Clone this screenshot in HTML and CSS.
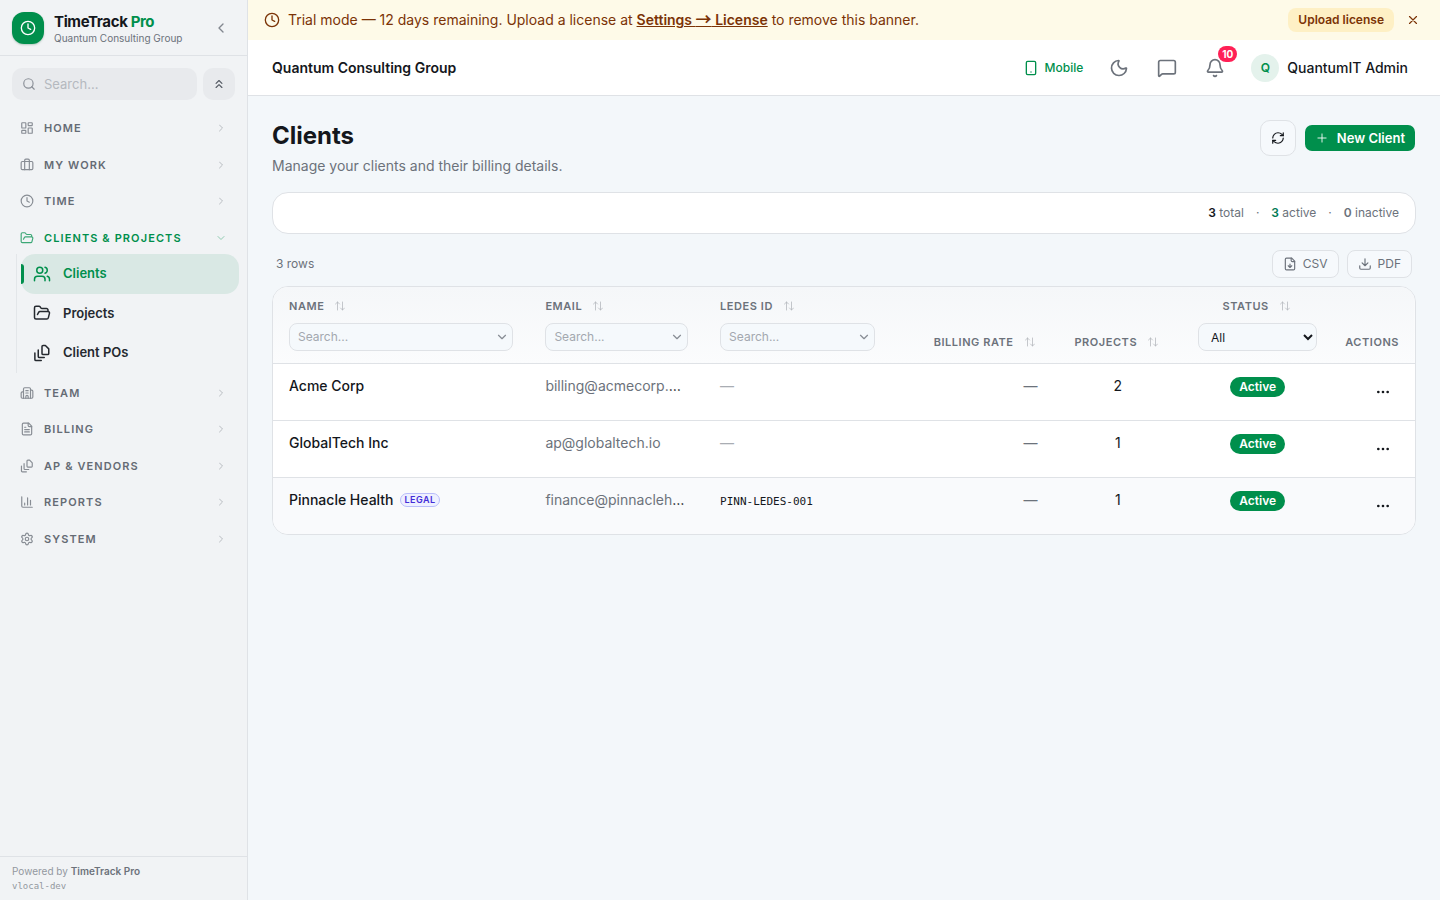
FILE: index.html
```html
<!DOCTYPE html>
<html lang="en">
<head>
<meta charset="utf-8">
<meta name="viewport" content="width=device-width, initial-scale=1">
<title>Clients – TimeTrack Pro</title>
<link rel="stylesheet" href="styles.css">
</head>
<body>
<svg class="sprite" aria-hidden="true">
  <symbol id="clock" viewBox="0 0 24 24"><circle cx="12" cy="12" r="10"/><path d="M12 6v6l4 2"/></symbol>
  <symbol id="left" viewBox="0 0 24 24"><path d="m15 18-6-6 6-6"/></symbol>
  <symbol id="right" viewBox="0 0 24 24"><path d="m9 18 6-6-6-6"/></symbol>
  <symbol id="down" viewBox="0 0 24 24"><path d="m6 9 6 6 6-6"/></symbol>
  <symbol id="search" viewBox="0 0 24 24"><circle cx="11" cy="11" r="8"/><path d="m21 21-4.3-4.3"/></symbol>
  <symbol id="collapse" viewBox="0 0 24 24"><path d="m17 11-5-5-5 5M17 18l-5-5-5 5"/></symbol>
  <symbol id="dashboard" viewBox="0 0 24 24"><rect width="7" height="9" x="3" y="3" rx="1"/><rect width="7" height="5" x="14" y="3" rx="1"/><rect width="7" height="9" x="14" y="12" rx="1"/><rect width="7" height="5" x="3" y="16" rx="1"/></symbol>
  <symbol id="briefcase" viewBox="0 0 24 24"><path d="M16 20V4a2 2 0 0 0-2-2h-4a2 2 0 0 0-2 2v16"/><rect width="20" height="14" x="2" y="6" rx="2"/></symbol>
  <symbol id="folder" viewBox="0 0 24 24"><path d="m6 14 1.5-2.9A2 2 0 0 1 9.240 10H20a2 2 0 0 1 1.940 2.500l-1.540 6a2 2 0 0 1-1.950 1.500H4a2 2 0 0 1-2-2V5a2 2 0 0 1 2-2h3.900a2 2 0 0 1 1.690.9l.81 1.200a2 2 0 0 0 1.670.9H18a2 2 0 0 1 2 2v2"/></symbol>
  <symbol id="users" viewBox="0 0 24 24"><path d="M16 21v-2a4 4 0 0 0-4-4H6a4 4 0 0 0-4 4v2"/><circle cx="9" cy="7" r="4"/><path d="M22 21v-2a4 4 0 0 0-3-3.870M16 3.130a4 4 0 0 1 0 7.750"/></symbol>
  <symbol id="stack" viewBox="0 0 24 24"><path d="M21 6.500v6c0 .8-.7 1.500-1.500 1.500h-6c-.8 0-1.500-.7-1.500-1.500v-9c0-.8.7-1.500 1.500-1.500H16.500z"/><path d="M7 8v8.500c0 .8.7 1.500 1.500 1.500H15"/><path d="M2.500 12v8.500c0 .8.7 1.500 1.500 1.500H11"/></symbol>
  <symbol id="building" viewBox="0 0 24 24"><path d="M10 12h4M10 8h4M14 21v-3a2 2 0 0 0-4 0v3"/><path d="M6 10H4a2 2 0 0 0-2 2v7a2 2 0 0 0 2 2h16a2 2 0 0 0 2-2V9a2 2 0 0 0-2-2h-2"/><path d="M6 21V5a2 2 0 0 1 2-2h8a2 2 0 0 1 2 2v16"/></symbol>
  <symbol id="file" viewBox="0 0 24 24"><path d="M15 2H6a2 2 0 0 0-2 2v16a2 2 0 0 0 2 2h12a2 2 0 0 0 2-2V7Z"/><path d="M14 2v4a2 2 0 0 0 2 2h4M10 9H8M16 13H8M16 17H8"/></symbol>
  <symbol id="chart" viewBox="0 0 24 24"><path d="M3 3v16a2 2 0 0 0 2 2h16M18 17V9M13 17V5M8 17v-3"/></symbol>
  <symbol id="gear" viewBox="0 0 24 24"><path d="M9.671 4.136a2.34 2.34 0 0 1 4.659 0 2.34 2.34 0 0 0 3.319 1.915 2.34 2.34 0 0 1 2.33 4.033 2.34 2.34 0 0 0 0 3.831 2.34 2.34 0 0 1-2.33 4.033 2.34 2.34 0 0 0-3.319 1.915 2.34 2.34 0 0 1-4.659 0 2.34 2.34 0 0 0-3.32-1.915 2.34 2.34 0 0 1-2.33-4.033 2.34 2.34 0 0 0 0-3.831A2.34 2.34 0 0 1 6.35 6.051a2.34 2.34 0 0 0 3.319-1.915"/><circle cx="12" cy="12" r="3"/></symbol>
  <symbol id="close" viewBox="0 0 24 24"><path d="M18 6 6 18M6 6l12 12"/></symbol>
  <symbol id="phone" viewBox="0 0 24 24"><rect width="14" height="20" x="5" y="2" rx="2"/><path d="M12 18h.01"/></symbol>
  <symbol id="moon" viewBox="0 0 24 24"><path d="M20.985 12.486a9 9 0 1 1-9.473-9.472c.405-.022.617.46.402.803a6 6 0 0 0 8.268 8.268c.344-.215.825-.004.803.401"/></symbol>
  <symbol id="message" viewBox="0 0 24 24"><path d="M22 17a2 2 0 0 1-2 2H6.828a2 2 0 0 0-1.414.586l-2.202 2.202A.71.71 0 0 1 2 21.286V5a2 2 0 0 1 2-2h16a2 2 0 0 1 2 2z"/></symbol>
  <symbol id="bell" viewBox="0 0 24 24"><path d="M10.268 21a2 2 0 0 0 3.464 0"/><path d="M3.262 15.326A1 1 0 0 0 4 17h16a1 1 0 0 0 .740-1.673C19.410 13.956 18 12.499 18 8A6 6 0 0 0 6 8c0 4.499-1.411 5.956-2.738 7.326"/></symbol>
  <symbol id="refresh" viewBox="0 0 24 24"><path d="M3 12a9 9 0 0 1 9-9 9.750 9.750 0 0 1 6.740 2.740L21 8"/><path d="M21 3v5h-5"/><path d="M21 12a9 9 0 0 1-9 9 9.750 9.750 0 0 1-6.740-2.740L3 16"/><path d="M8 16H3v5"/></symbol>
  <symbol id="plus" viewBox="0 0 24 24"><path d="M5 12h14M12 5v14"/></symbol>
  <symbol id="filedown" viewBox="0 0 24 24"><path d="M15 2H6a2 2 0 0 0-2 2v16a2 2 0 0 0 2 2h12a2 2 0 0 0 2-2V7Z"/><path d="M14 2v4a2 2 0 0 0 2 2h4M12 18v-6M9 15l3 3 3-3"/></symbol>
  <symbol id="download" viewBox="0 0 24 24"><path d="M21 15v4a2 2 0 0 1-2 2H5a2 2 0 0 1-2-2v-4M7 10l5 5 5-5M12 15V3"/></symbol>
  <symbol id="sort" viewBox="0 0 24 24"><path d="m21 16-4 4-4-4M17 20V4M3 8l4-4 4 4M7 4v16"/></symbol>
  <symbol id="dots" viewBox="0 0 24 24"><circle cx="12" cy="12" r="1"/><circle cx="19" cy="12" r="1"/><circle cx="5" cy="12" r="1"/></symbol>
</svg>

<div class="app">
  <aside class="sidebar">
    <div class="brand">
      <span class="logo"><svg class="icon i16"><use href="#clock"/></svg></span>
      <div class="brand-text">
        <div class="brand-name">TimeTrack <span class="accent">Pro</span></div>
        <div class="brand-org">Quantum Consulting Group</div>
      </div>
      <button class="plain collapse" aria-label="Collapse sidebar"><svg class="icon i16"><use href="#left"/></svg></button>
    </div>
    <div class="side-tools">
      <label class="side-search"><svg class="icon i14"><use href="#search"/></svg><input type="text" placeholder="Search..." aria-label="Search menu"></label>
      <button class="side-fold" aria-label="Collapse all"><svg class="icon i14"><use href="#collapse"/></svg></button>
    </div>
    <nav class="nav">
      <button class="section"><svg class="icon i14"><use href="#dashboard"/></svg><span>HOME</span><svg class="icon i12 chev"><use href="#right"/></svg></button>
      <button class="section"><svg class="icon i14"><use href="#briefcase"/></svg><span>MY WORK</span><svg class="icon i12 chev"><use href="#right"/></svg></button>
      <button class="section"><svg class="icon i14"><use href="#clock"/></svg><span>TIME</span><svg class="icon i12 chev"><use href="#right"/></svg></button>
      <div>
        <button class="section open" aria-expanded="true"><svg class="icon i14"><use href="#folder"/></svg><span>CLIENTS &amp; PROJECTS</span><svg class="icon i12 chev"><use href="#down"/></svg></button>
        <div class="submenu">
          <a class="item current" href="#clients" aria-current="page"><svg class="icon i18"><use href="#users"/></svg>Clients</a>
          <a class="item" href="#projects"><svg class="icon i18"><use href="#folder"/></svg>Projects</a>
          <a class="item" href="#pos"><svg class="icon i18"><use href="#stack"/></svg>Client POs</a>
        </div>
      </div>
      <button class="section"><svg class="icon i14"><use href="#building"/></svg><span>TEAM</span><svg class="icon i12 chev"><use href="#right"/></svg></button>
      <button class="section"><svg class="icon i14"><use href="#file"/></svg><span>BILLING</span><svg class="icon i12 chev"><use href="#right"/></svg></button>
      <button class="section"><svg class="icon i14"><use href="#stack"/></svg><span>AP &amp; VENDORS</span><svg class="icon i12 chev"><use href="#right"/></svg></button>
      <button class="section"><svg class="icon i14"><use href="#chart"/></svg><span>REPORTS</span><svg class="icon i12 chev"><use href="#right"/></svg></button>
      <button class="section"><svg class="icon i14"><use href="#gear"/></svg><span>SYSTEM</span><svg class="icon i12 chev"><use href="#right"/></svg></button>
    </nav>
    <footer class="side-foot">
      <div>Powered by <strong>TimeTrack Pro</strong></div>
      <div class="version">vlocal-dev</div>
    </footer>
  </aside>

  <div class="page">
    <div class="banner">
      <svg class="icon i16"><use href="#clock"/></svg>
      <p>Trial mode — 12 days remaining. Upload a license at <a href="#license">Settings <span class="arrow">→</span> License</a> to remove this banner.</p>
      <button class="upload">Upload license</button>
      <button class="plain dismiss" aria-label="Dismiss"><svg class="icon i14"><use href="#close"/></svg></button>
    </div>
    <header class="topbar">
      <div class="org">Quantum Consulting Group</div>
      <a class="mobile" href="#mobile"><svg class="icon i16"><use href="#phone"/></svg>Mobile</a>
      <div class="top-icons">
        <button class="plain top-btn" aria-label="Dark mode"><svg class="icon i20"><use href="#moon"/></svg></button>
        <button class="plain top-btn" aria-label="Messages"><svg class="icon i20"><use href="#message"/></svg></button>
        <button class="plain top-btn" aria-label="Notifications"><svg class="icon i20"><use href="#bell"/></svg><span class="count">10</span></button>
      </div>
      <button class="plain user"><span class="avatar">Q</span>QuantumIT Admin</button>
    </header>

    <main class="main">
      <div class="heading">
        <div>
          <h1>Clients</h1>
          <p>Manage your clients and their billing details.</p>
        </div>
        <div class="actions">
          <button class="refresh" aria-label="Refresh"><svg class="icon i14"><use href="#refresh"/></svg></button>
          <button class="new"><svg class="icon i14"><use href="#plus"/></svg>New Client</button>
        </div>
      </div>

      <div class="stats">
        <span><b class="dark">3</b> total</span><span>·</span><span><b class="teal">3</b> active</span><span>·</span><span><b>0</b> inactive</span>
      </div>

      <div class="toolbar">
        <span class="rows">3 rows</span>
        <button class="export"><svg class="icon i14"><use href="#filedown"/></svg>CSV</button>
        <button class="export"><svg class="icon i14"><use href="#download"/></svg>PDF</button>
      </div>

      <div class="card">
        <table>
          <colgroup><col class="c-name"><col class="c-email"><col class="c-ledes"><col class="c-rate"><col class="c-projects"><col class="c-status"><col class="c-actions"></colgroup>
          <thead>
            <tr>
              <th><button class="sort">NAME<svg class="icon i12"><use href="#sort"/></svg></button><label class="filter"><input type="text" placeholder="Search..." aria-label="Filter by name"><svg class="icon i14"><use href="#down"/></svg></label></th>
              <th><button class="sort">EMAIL<svg class="icon i12"><use href="#sort"/></svg></button><label class="filter"><input type="text" placeholder="Search..." aria-label="Filter by email"><svg class="icon i14"><use href="#down"/></svg></label></th>
              <th><button class="sort">LEDES ID<svg class="icon i12"><use href="#sort"/></svg></button><label class="filter"><input type="text" placeholder="Search..." aria-label="Filter by LEDES ID"><svg class="icon i14"><use href="#down"/></svg></label></th>
              <th><button class="sort end">BILLING RATE<svg class="icon i12"><use href="#sort"/></svg></button></th>
              <th><button class="sort mid">PROJECTS<svg class="icon i12"><use href="#sort"/></svg></button></th>
              <th><button class="sort mid">STATUS<svg class="icon i12"><use href="#sort"/></svg></button><select class="status-filter" aria-label="Filter by status"><option>All</option><option>Active</option><option>Inactive</option></select></th>
              <th class="right">ACTIONS</th>
            </tr>
          </thead>
          <tbody>
            <tr>
              <td class="name">Acme Corp</td>
              <td class="email"><span>billing@acmecorp.com</span></td>
              <td class="none">—</td>
              <td class="right muted">—</td>
              <td class="center">2</td>
              <td class="center"><span class="badge">Active</span></td>
              <td class="right"><button class="plain more" aria-label="Actions for Acme Corp"><svg class="icon i16"><use href="#dots"/></svg></button></td>
            </tr>
            <tr>
              <td class="name">GlobalTech Inc</td>
              <td class="email"><span>ap@globaltech.io</span></td>
              <td class="none">—</td>
              <td class="right muted">—</td>
              <td class="center">1</td>
              <td class="center"><span class="badge">Active</span></td>
              <td class="right"><button class="plain more" aria-label="Actions for GlobalTech Inc"><svg class="icon i16"><use href="#dots"/></svg></button></td>
            </tr>
            <tr class="shaded">
              <td class="name"><div class="name-line">Pinnacle Health<span class="tag">LEGAL</span></div></td>
              <td class="email"><span>finance@pinnaclehealth.org</span></td>
              <td><span class="code">PINN-LEDES-001</span></td>
              <td class="right muted">—</td>
              <td class="center">1</td>
              <td class="center"><span class="badge">Active</span></td>
              <td class="right"><button class="plain more" aria-label="Actions for Pinnacle Health"><svg class="icon i16"><use href="#dots"/></svg></button></td>
            </tr>
          </tbody>
        </table>
      </div>
    </main>
  </div>
</div>
</body>
</html>
```
FILE: styles.css
```css
:root {
  --green: #008f4c;
  --ink: #14171c;
  --muted: #6c727b;
  --line: #dfe2e6;
  --bg: #f3f7fa;
}

* { box-sizing: border-box; }

body {
  margin: 0;
  font: 14px/20px Inter, "Liberation Sans", sans-serif;
  color: var(--ink);
  background: var(--bg);
}

button, input, select { font: inherit; color: inherit; margin: 0; }
button { cursor: pointer; }
h1, p { margin: 0; }
a { color: inherit; text-decoration: none; }

.sprite { position: absolute; width: 0; height: 0; }
.icon {
  flex: none;
  display: block;
  fill: none;
  stroke: currentColor;
  stroke-width: 2;
  stroke-linecap: round;
  stroke-linejoin: round;
}
.i12 { width: 12px; height: 12px; }
.i14 { width: 14px; height: 14px; }
.i16 { width: 16px; height: 16px; }
.i18 { width: 18px; height: 18px; }
.i20 { width: 20px; height: 20px; }
.plain { border: 0; padding: 0; background: none; }
.accent { color: var(--green); }

.app { display: flex; min-height: 100vh; }

/* Sidebar */
.sidebar {
  flex: none;
  width: 248px;
  display: flex;
  flex-direction: column;
  background: #f1f3f5;
  border-right: 1px solid var(--line);
}
.brand {
  display: flex;
  align-items: center;
  gap: 10px;
  height: 56px;
  padding: 0 12px;
  border-bottom: 1px solid var(--line);
}
.logo {
  display: grid;
  place-items: center;
  width: 32px;
  height: 32px;
  border-radius: 12px;
  background: var(--green);
  color: #fff;
  box-shadow: 0 1px 2px rgba(0, 80, 40, .25);
}
.brand-text { flex: 1; padding-top: 2px; }
.brand-name { font-size: 15px; font-weight: 700; line-height: 20px; letter-spacing: -0.025em; }
.brand-org { font-size: 10px; line-height: 13px; color: var(--muted); }
.collapse { display: grid; place-items: center; width: 28px; height: 28px; color: #82878f; }

.side-tools { display: flex; gap: 6px; padding: 12px; }
.side-search {
  flex: 1;
  min-width: 0;
  display: flex;
  align-items: center;
  gap: 8px;
  height: 32px;
  padding: 0 10px;
  border-radius: 10px;
  background: #e8eaed;
  color: #8b9098;
}
.side-search input {
  flex: 1;
  min-width: 0;
  border: 0;
  padding: 0;
  background: none;
  font-size: 13px;
  color: var(--ink);
}
.side-search input::placeholder { color: #b5b9bf; }
.side-fold {
  flex: none;
  display: grid;
  place-items: center;
  width: 32px;
  height: 32px;
  padding: 0;
  border: 0;
  border-radius: 10px;
  background: #e8eaed;
  color: #555b64;
}

.nav { flex: 1; display: flex; flex-direction: column; gap: 4px; padding: 0 8px; }
.section {
  display: flex;
  align-items: center;
  gap: 10px;
  width: 100%;
  padding: 8px 12px;
  border: 0;
  background: none;
  font-size: 11px;
  font-weight: 600;
  line-height: 1.5;
  letter-spacing: 0.1em;
  text-align: left;
  color: #656b74;
}
.section span { flex: 1; }
.section .icon { opacity: .75; }
.section .chev { opacity: .4; }
.section.open { color: var(--green); }
.submenu { margin-left: 8px; padding-left: 4px; border-left: 1px solid #e3e6e9; }
.item {
  display: flex;
  align-items: center;
  gap: 12px;
  padding: 10px 12px;
  border-radius: 14px;
  font-size: 13px;
  font-weight: 600;
  line-height: 1.5;
  color: #25292f;
}
.item.current { position: relative; background: #d9e8e4; color: var(--green); }
.item.current::before {
  content: "";
  position: absolute;
  left: 0;
  top: 10px;
  bottom: 10px;
  width: 3px;
  border-radius: 0 3px 3px 0;
  background: var(--green);
}
.side-foot {
  padding: 7px 12px;
  border-top: 1px solid var(--line);
  font-size: 10px;
  line-height: 15px;
  color: #93989f;
}
.side-foot strong { font-weight: 600; color: var(--muted); }
.version { font-family: "DejaVu Sans Mono", monospace; font-size: 9px; line-height: 14px; }

/* Page frame */
.page { flex: 1; min-width: 0; display: flex; flex-direction: column; }
.banner {
  display: flex;
  align-items: center;
  gap: 8px;
  height: 40px;
  padding: 0 16px;
  background: #fefae8;
  color: #7b3306;
}
.banner p { flex: 1; }
.banner a { font-weight: 600; text-decoration: underline; }
.arrow { font-family: "Noto Sans CJK JP", sans-serif; font-size: 16px; line-height: 1; }
.upload {
  height: 24px;
  padding: 0 10px;
  border: 0;
  border-radius: 8px;
  background: #fef0c5;
  font-size: 12px;
  font-weight: 600;
}
.dismiss { display: grid; place-items: center; width: 22px; height: 24px; }

.topbar {
  display: flex;
  align-items: center;
  height: 56px;
  padding: 0 24px;
  background: #fff;
  border-bottom: 1px solid var(--line);
}
.org { flex: 1; font-weight: 600; }
.mobile { display: flex; align-items: center; gap: 6px; font-size: 12px; font-weight: 500; color: var(--green); }
.top-icons { display: flex; gap: 8px; padding: 0 8px 0 16px; }
.top-btn { position: relative; display: grid; place-items: center; width: 40px; height: 40px; color: var(--muted); }
.count {
  position: absolute;
  top: -2px;
  right: -2px;
  padding: 0 4px;
  border-radius: 8px;
  background: #ff2056;
  color: #fff;
  font-size: 10px;
  font-weight: 700;
  line-height: 16px;
}
.user { display: flex; align-items: center; gap: 8px; padding: 0 8px; font-weight: 500; }
.avatar {
  display: grid;
  place-items: center;
  width: 28px;
  height: 28px;
  border-radius: 50%;
  background: #e4f2ec;
  color: var(--green);
  font-size: 12px;
  font-weight: 600;
}

/* Content */
.main { padding: 24px; }
.heading { display: flex; justify-content: space-between; align-items: flex-start; margin-bottom: 16px; }
h1 { font-size: 24px; line-height: 32px; font-weight: 700; }
.heading p { margin-top: 4px; color: var(--muted); }
.actions { display: flex; align-items: center; gap: 8px; }
.refresh {
  display: grid;
  place-items: center;
  width: 36px;
  height: 36px;
  padding: 0;
  border: 1px solid var(--line);
  border-radius: 10px;
  background: #f6f9fc;
}
.new {
  display: flex;
  align-items: center;
  gap: 8px;
  height: 28px;
  padding: 0 10px;
  border: 1px solid transparent;
  border-radius: 8px;
  background: var(--green) padding-box;
  color: #fff;
  font-size: 13px;
  font-weight: 600;
}
.new .icon { stroke-width: 1.5; }

.stats {
  display: flex;
  justify-content: flex-end;
  gap: 12px;
  padding: 12px 16px;
  border: 1px solid var(--line);
  border-radius: 16px;
  background: #fff;
  color: var(--muted);
  font-size: 12px;
  line-height: 16px;
}
.stats b { font-weight: 600; }
.stats .dark { color: var(--ink); }
.stats .teal { color: #007a55; }

.toolbar { display: flex; align-items: center; gap: 8px; margin: 16px 0 8px; padding: 0 4px; }
.rows { flex: 1; font-size: 12px; color: var(--muted); }
.export {
  display: flex;
  align-items: center;
  gap: 6px;
  height: 28px;
  padding: 0 10px;
  border: 1px solid var(--line);
  border-radius: 8px;
  background: #f6f9fc;
  font-size: 12px;
  color: var(--muted);
}

.card { overflow: hidden; border: 1px solid var(--line); border-radius: 16px; background: #fff; }
table { width: 100%; table-layout: fixed; border-collapse: separate; border-spacing: 0; }
.c-name { width: 22.45%; }
.c-email { width: 15.3%; }
.c-ledes { width: 16.4%; }
.c-rate { width: 14.2%; }
.c-projects { width: 11.25%; }
.c-status { width: 13.25%; }
.c-actions { width: 7.15%; }
thead { background: linear-gradient(#f5f7f9, #fbfcfd); }
th {
  padding: 10px 16px 12px;
  border-bottom: 1px solid var(--line);
  vertical-align: bottom;
  font-size: 11px;
  font-weight: 600;
  line-height: 18px;
  letter-spacing: 0.05em;
  text-align: left;
  color: var(--muted);
}
th.right { padding-left: 0; text-align: right; }
.sort {
  display: flex;
  align-items: center;
  gap: 10px;
  width: 100%;
  padding: 0 2px 0 0;
  border: 0;
  background: none;
  letter-spacing: inherit;
  white-space: nowrap;
}
.sort .icon { opacity: .5; stroke-width: 1.5; }
.end { justify-content: flex-end; }
.mid { justify-content: center; }
.filter, .status-filter {
  display: flex;
  align-items: center;
  width: 100%;
  height: 28px;
  margin-top: 8px;
  padding: 0 3px 0 8px;
  border: 1px solid var(--line);
  border-radius: 8px;
  background: #f5f9fc;
  font-size: 12px;
  font-weight: 400;
  letter-spacing: normal;
}
.filter .icon { opacity: .8; }
.filter input { flex: 1; min-width: 0; border: 0; padding: 0; background: none; color: var(--ink); }
.filter input::placeholder { color: #a3a8af; }
.status-filter { padding: 0 0 0 8px; color: var(--ink); }
td { padding: 12px 16px; border-bottom: 1px solid var(--line); vertical-align: top; }
tbody tr:last-child td { border-bottom: 0; }
.shaded { background: #f9fafc; }
.name { font-weight: 500; }
.name-line { display: flex; align-items: center; gap: 6px; }
.tag {
  padding: 0 4px;
  border: 1px solid #b9bdfa;
  border-radius: 7px;
  background: #eef0ff;
  color: #432dd7;
  font-size: 9px;
  font-weight: 600;
  line-height: 12px;
  letter-spacing: 0.05em;
}
.email { overflow: hidden; text-overflow: ellipsis; white-space: nowrap; }
.email span, .muted { color: var(--muted); }
.none { color: #a9adb3; }
.code { font-family: "DejaVu Sans Mono", monospace; font-size: 11px; }
.right { text-align: right; }
.center { text-align: center; }
.badge {
  display: inline-block;
  margin-top: 1px;
  padding: 0 9px;
  border-radius: 10px;
  background: var(--green);
  color: #fff;
  font-size: 12px;
  font-weight: 600;
  line-height: 20px;
  vertical-align: top;
}
.more { display: inline-grid; place-items: center; width: 32px; height: 32px; vertical-align: top; }
```
